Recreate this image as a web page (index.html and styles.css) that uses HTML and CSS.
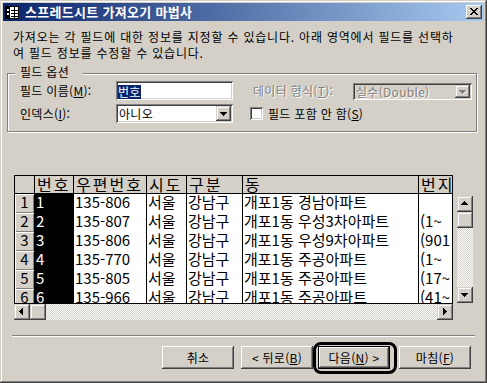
FILE: index.html
```html
<!DOCTYPE html>
<html lang="ko">
<head>
<meta charset="utf-8">
<title>스프레드시트 가져오기 마법사</title>
<link rel="stylesheet" href="styles.css">
</head>
<body>
<div class="window">
  <div class="titlebar">
    <svg class="app-icon" width="14" height="13" viewBox="0 0 14 13" shape-rendering="crispEdges">
      <rect x="0.5" y="0.5" width="13" height="12" fill="#fff" stroke="#000"/>
      <path d="M1 1h4v11H1z" fill="#000"/>
      <path d="M2 3h2v2H2zM2 7h2v2H2z" fill="#fff"/>
      <path d="M6 4h7v1H6zM6 7h7v1H6zM6 10h7v1H6zM9 1h1v11H9z" fill="#000"/>
    </svg>
    <span class="title-text">스프레드시트 가져오기 마법사</span>
    <div class="close-btn">
      <svg width="8" height="7" viewBox="0 0 8 7" shape-rendering="crispEdges"><path d="M0 0h2v1h1v1h2V1h1V0h2v1H7v1H6v1H5v1h1v1h1v1h1v1H6V6H5V5H3v1H2v1H0V6h1V5h1V4h1V3H2V2H1V1H0z" fill="#000"/></svg>
    </div>
  </div>

  <p class="intro">가져오는 각 필드에 대한 정보를 지정할 수 있습니다. 아래 영역에서 필드를 선택하<br>여 필드 정보를 수정할 수 있습니다.</p>

  <div class="group">
    <div class="group-title">필드 옵션</div>
    <div class="group-rows">
      <div class="row">
        <span class="label">필드 이름(<u>M</u>):</span>
        <div class="field"><span class="selected">번호</span></div>
        <span class="label label-wide disabled">데이터 형식(<u>T</u>):</span>
        <div class="combo combo-disabled">
          <span class="combo-text disabled">실수(Double)</span>
          <span class="drop-btn"><svg width="15" height="13" viewBox="0 0 15 13" shape-rendering="crispEdges"><path d="M4 5h7v1H4zM5 6h5v1H5zM6 7h3v1H6zM7 8h1v1H7z" fill="#808080"/><path d="M8 8h1v1H8zM9 7h1v1H9zM10 6h1v1h-1zM11 5h1v1h-1z" fill="#fff"/></svg></span>
        </div>
      </div>
      <div class="row">
        <span class="label">인덱스(<u>I</u>):</span>
        <div class="combo">
          <span class="combo-text">아니오</span>
          <span class="drop-btn"><svg width="15" height="15" viewBox="0 0 15 15" shape-rendering="crispEdges"><path d="M4 6h7v1H4zM5 7h5v1H5zM6 8h3v1H6zM7 9h1v1H7z" fill="#000"/></svg></span>
        </div>
        <span class="checkbox"></span>
        <span class="check-label">필드 포함 안 함(<u>S</u>)</span>
      </div>
    </div>
  </div>

  <div class="grid-area">
    <div class="sheet-col">
      <div class="viewport">
        <table class="sheet">
          <thead>
            <tr><th class="w0"></th><th class="w1">번호</th><th class="w2">우편번호</th><th class="w3">시도</th><th class="w4">구분</th><th class="w5">동</th><th class="w6">번지</th></tr>
          </thead>
          <tbody>
            <tr><th class="rh">1</th><td class="sel">1</td><td>135-806</td><td>서울</td><td>강남구</td><td>개포1동 경남아파트</td><td></td></tr>
            <tr><th class="rh">2</th><td class="sel">2</td><td>135-807</td><td>서울</td><td>강남구</td><td>개포1동 우성3차아파트</td><td>(1~</td></tr>
            <tr><th class="rh">3</th><td class="sel">3</td><td>135-806</td><td>서울</td><td>강남구</td><td>개포1동 우성9차아파트</td><td>(901</td></tr>
            <tr><th class="rh">4</th><td class="sel">4</td><td>135-770</td><td>서울</td><td>강남구</td><td>개포1동 주공아파트</td><td>(1~</td></tr>
            <tr><th class="rh">5</th><td class="sel">5</td><td>135-805</td><td>서울</td><td>강남구</td><td>개포1동 주공아파트</td><td>(17~</td></tr>
            <tr><th class="rh">6</th><td class="sel">6</td><td>135-966</td><td>서울</td><td>강남구</td><td>개포1동 주공아파트</td><td>(41~</td></tr>
          </tbody>
        </table>
      </div>
      <div class="hscroll">
        <span class="sb-btn"><svg width="16" height="16" viewBox="0 0 16 16" shape-rendering="crispEdges"><path d="M5 7h1v1H5zM6 6h1v3H6zM7 5h1v5H7zM8 4h1v7H8z" fill="#000"/></svg></span>
        <span class="sb-btn"></span>
        <span class="sb-track"></span>
        <span class="sb-btn"><svg width="16" height="16" viewBox="0 0 16 16" shape-rendering="crispEdges"><path d="M6 4h1v7H6zM7 5h1v5H7zM8 6h1v3H8zM9 7h1v1H9z" fill="#000"/></svg></span>
      </div>
    </div>
    <div class="vscroll">
      <span class="sb-btn"><svg width="16" height="16" viewBox="0 0 16 16" shape-rendering="crispEdges"><path d="M7 5h1v1H7zM6 6h3v1H6zM5 7h5v1H5zM4 8h7v1H4z" fill="#000"/></svg></span>
      <span class="sb-btn"></span>
      <span class="sb-track"></span>
      <span class="sb-btn"><svg width="16" height="16" viewBox="0 0 16 16" shape-rendering="crispEdges"><path d="M4 6h7v1H4zM5 7h5v1H5zM6 8h3v1H6zM7 9h1v1H7z" fill="#000"/></svg></span>
    </div>
  </div>

  <div class="sep"></div>

  <div class="buttons">
    <button class="btn btn-cancel">취소</button>
    <button class="btn btn-back">&lt; 뒤로(<u>B</u>)</button>
    <button class="btn btn-next btn-default">다음(<u>N</u>) &gt;<span class="focus-ring"></span></button>
    <button class="btn btn-finish">마침(<u>F</u>)</button>
  </div>
</div>
</body>
</html>
```

FILE: styles.css
```css
* { box-sizing: border-box; }

html, body {
  margin: 0;
  padding: 0;
}

body {
  width: 487px;
  height: 383px;
  overflow: hidden;
  background: #d4d0c8;
  font-family: "Noto Sans CJK KR", "Noto Sans", sans-serif;
  font-size: 12px;
  color: #000;
}

.window {
  width: 487px;
  height: 383px;
  padding: 3px;
  background: #d4d0c8;
  box-shadow: inset -1px -1px #404040, inset 1px 1px #d4d0c8, inset -2px -2px #808080, inset 2px 2px #fff;
}

/* Title bar */
.titlebar {
  height: 18px;
  display: flex;
  align-items: center;
  background: linear-gradient(90deg, #0a246a 0%, #a6caf0 100%);
  color: #fff;
  font-weight: bold;
  font-size: 13px;
  line-height: 14px;
}

.app-icon {
  margin-left: 2px;
  display: block;
}

.title-text {
  margin-left: 6px;
  letter-spacing: 0.3px;
}

.close-btn {
  margin-left: auto;
  margin-right: 2px;
  width: 16px;
  height: 14px;
  background: #d4d0c8;
  box-shadow: inset -1px -1px #404040, inset 1px 1px #fff, inset -2px -2px #808080;
  display: flex;
  align-items: center;
  justify-content: center;
  padding: 0 1px 1px 0;
}

.close-btn svg { display: block; }

/* Intro */
.intro {
  margin: 8px 0 0 10px;
  line-height: 16px;
  letter-spacing: 0.8px;
  white-space: nowrap;
}

/* Group box */
.group {
  margin: 12px 0 0 4px;
  width: 470px;
  border: 1px solid #808080;
  box-shadow: inset 1px 1px #fff, 1px 1px #fff;
}

.group-title {
  width: fit-content;
  margin: -9px 0 0 7px;
  padding: 0 14px 0 5px;
  background: #d4d0c8;
  line-height: 14px;
  letter-spacing: 0.3px;
}

.group-rows {
  padding: 2px 0 8px 12px;
  display: flex;
  flex-direction: column;
  gap: 4px;
  letter-spacing: 0.3px;
}

.row {
  display: flex;
  align-items: center;
  height: 19px;
  line-height: 14px;
}

.label {
  width: 96px;
  white-space: nowrap;
}

.label-wide {
  width: 100px;
  margin-left: 20px;
}

.disabled {
  color: #808080;
  text-shadow: 1px 1px 0 #fff;
}

.field {
  width: 117px;
  height: 19px;
  background: #fff;
  box-shadow: inset 1px 1px #808080, inset -1px -1px #fff, inset 2px 2px #404040, inset -2px -2px #d4d0c8;
  padding: 2px 2px 0;
  display: flex;
  align-items: center;
}

.selected {
  background: #0a246a;
  color: #fff;
  line-height: 14px;
}

.combo {
  width: 117px;
  height: 19px;
  background: #fff;
  box-shadow: inset 1px 1px #808080, inset -1px -1px #fff, inset 2px 2px #404040, inset -2px -2px #d4d0c8;
  padding: 2px;
  display: flex;
  align-items: center;
}

.combo-text {
  flex: 1;
  white-space: nowrap;
  padding-left: 1px;
}

.combo-disabled {
  width: 119px;
  height: 17px;
  align-self: flex-start;
  margin-top: 2px;
  background: #d4d0c8;
}

.drop-btn {
  width: 15px;
  height: 15px;
  background: #d4d0c8;
  box-shadow: inset -1px -1px #404040, inset 1px 1px #d4d0c8, inset -2px -2px #808080, inset 2px 2px #fff;
  display: flex;
  align-items: center;
  justify-content: center;
}

.combo-disabled .drop-btn { height: 13px; }

.drop-btn svg { display: block; }

.checkbox {
  width: 13px;
  height: 13px;
  margin-left: 17px;
  margin-right: 5px;
  background: #fff;
  box-shadow: inset 1px 1px #808080, inset -1px -1px #fff, inset 2px 2px #404040, inset -2px -2px #d4d0c8;
}

.check-label { white-space: nowrap; }

/* Grid */
.grid-area {
  margin: 43px 0 0 11px;
  display: flex;
  align-items: flex-start;
}

.sheet-col { width: 439px; }

.viewport {
  height: 129px;
  overflow: hidden;
  border-bottom: 1px solid #000;
}

.sheet {
  table-layout: fixed;
  width: 439px;
  border-collapse: separate;
  border-spacing: 0;
  border-top: 1px solid #000;
  border-left: 1px solid #000;
  font-size: 15px;
  line-height: 15px;
}

.sheet th, .sheet td {
  padding: 0 0 0 1px;
  border-right: 1px solid #000;
  white-space: nowrap;
  overflow: hidden;
  text-align: left;
  vertical-align: top;
  font-weight: normal;
}

.sheet thead th {
  height: 18px;
  background: #d4d0c8;
  border-bottom: 1px solid #000;
  letter-spacing: 2px;
  padding-left: 2px;
  line-height: 16px;
  font-size: 16px;
}

.sheet td {
  height: 19px;
  background: #fff;
}

.sheet .sel {
  background: #000;
  color: #fff;
}

.sheet .rh {
  height: 19px;
  padding: 0;
  text-align: center;
  background: #d4d0c8;
  box-shadow: inset 1px 1px #fff, inset -1px -1px #808080;
}

.w0 { width: 20px; }
.w1 { width: 39px; }
.w2 { width: 73px; }
.w3 { width: 40px; }
.w4 { width: 56px; }
.w5 { width: 176px; }
.w6 { width: 34px; }

/* Scrollbars */
.sb-btn {
  width: 16px;
  height: 16px;
  flex: none;
  background: #d4d0c8;
  box-shadow: inset -1px -1px #404040, inset 1px 1px #d4d0c8, inset -2px -2px #808080, inset 2px 2px #fff;
}

.sb-btn svg { display: block; }

.sb-track {
  flex: 1;
  background-color: #fff;
  background-image: repeating-conic-gradient(#d4d0c8 0 25%, #fff 0 50%);
  background-size: 2px 2px;
}

.hscroll {
  height: 16px;
  display: flex;
}

.vscroll {
  margin: 21px 0 0 4px;
  width: 16px;
  height: 107px;
  display: flex;
  flex-direction: column;
}

/* Separator */
.sep {
  margin: 15px 9px 0;
  height: 2px;
  border-top: 1px solid #808080;
  border-bottom: 1px solid #fff;
}

/* Buttons */
.buttons {
  display: flex;
  margin-top: 9px;
  padding-left: 159px;
}

.btn {
  position: relative;
  width: 72px;
  height: 23px;
  padding: 0;
  border: none;
  background: #d4d0c8;
  box-shadow: inset -1px -1px #404040, inset 1px 1px #fff, inset -2px -2px #808080;
  font-family: "Noto Sans CJK KR", "Noto Sans", sans-serif;
  font-size: 12px;
  line-height: 14px;
  letter-spacing: 0.3px;
  color: #000;
}

.btn-back { margin-left: 7px; }
.btn-next { margin-left: 5px; }
.btn-finish { margin-left: 9px; }

.btn-default {
  box-shadow: inset 0 0 0 1px #000, inset -2px -2px #404040, inset 2px 2px #fff, inset -3px -3px #808080;
}

.focus-ring {
  position: absolute;
  left: -5px;
  top: -4px;
  width: 84px;
  height: 32px;
  border: 3px solid #000;
  border-radius: 8px;
}
```
